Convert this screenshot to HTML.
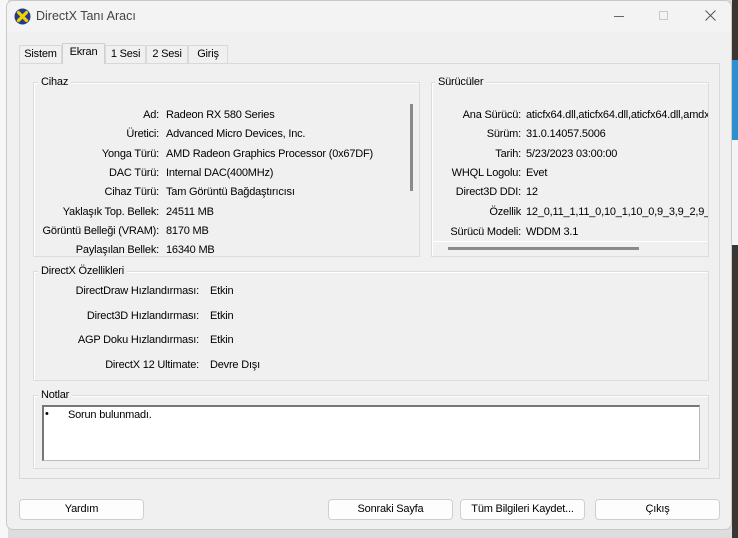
<!DOCTYPE html>
<html><head><meta charset="utf-8"><style>
*{box-sizing:border-box;margin:0;padding:0}
body{width:738px;height:538px;overflow:hidden;position:relative;background:#ddd;font-family:"Liberation Sans",sans-serif;font-size:12px;color:#000}
.a{position:absolute}
.win{left:6px;top:0;width:726px;height:530px;background:#f0f0f0;border:1px solid #c8c8c8;border-radius:7px;overflow:hidden}
.tb{left:0;top:0;width:100%;height:31px;background:#f3f3f3}
.grp{border:1px solid #dcdcdc;box-shadow:inset 1px 1px 0 #fff}
.gt{background:#f0f0f0;padding:0 3px;font-size:11px;letter-spacing:-0.2px}
.r{position:absolute;white-space:nowrap;font-size:11px;letter-spacing:-0.2px}
.l{text-align:right}
.btn{position:absolute;top:498px;height:21px;border:1px solid #cfcfcf;border-radius:4px;background:#fdfdfd;text-align:center;line-height:19px;font-size:11px;letter-spacing:-0.2px}
.tab{position:absolute;top:44px;height:18px;border:1px solid #d9d9d9;border-bottom:none;background:#f0f0f0;line-height:17px;text-align:center;font-size:11px;letter-spacing:-0.2px}
</style></head><body>
<div class="a" style="left:0;top:0;width:8px;height:538px;background:#f7f7f7"></div>
<div class="a" style="left:732px;top:0;width:6px;height:538px;background:#3a3634"></div>
<div class="a" style="left:732px;top:60px;width:6px;height:80px;background:#2d8fd0"></div>
<div class="a" style="left:732px;top:140px;width:6px;height:105px;background:#f4f4f4"></div>
<div class="a win">
 <div class="a tb"></div>
 <svg class="a" style="left:7px;top:7px" width="17" height="17" viewBox="0 0 17 17"><circle cx="8.5" cy="8.5" r="8" fill="#243a8c"/><path d="M4.5 4.5L12.5 12.5M12.5 4.5L4.5 12.5" stroke="#f1d200" stroke-width="3.2" stroke-linecap="round"/></svg>
 <div class="a" style="left:29px;top:8px;font-size:12.5px;color:#444">DirectX Tanı Aracı</div>
 <div class="a" style="left:607px;top:15px;width:10px;height:1px;background:#666"></div>
 <div class="a" style="left:652px;top:10px;width:9px;height:9px;border:1px solid #c8c8c8"></div>
 <svg class="a" style="left:698px;top:9px" width="11" height="11"><path d="M0.5 0.5L10.5 10.5M10.5 0.5L0.5 10.5" stroke="#555" stroke-width="1"/></svg>

 <div class="a" style="left:12px;top:62px;width:701px;height:416px;border:1px solid #d9d9d9;background:#f0f0f0"></div>
 <div class="tab" style="left:12px;width:43px">Sistem</div>
 <div class="tab" style="left:55px;width:43px;top:42px;height:21px;border-color:#d0d0d0;z-index:2">Ekran</div>
 <div class="tab" style="left:98px;width:41px">1 Sesi</div>
 <div class="tab" style="left:139px;width:42px">2 Sesi</div>
 <div class="tab" style="left:181px;width:40px">Giriş</div>

 <div class="a grp" style="left:26px;top:81px;width:387px;height:175px"></div>
 <div class="a gt" style="left:31px;top:75px">Cihaz</div>
 <div class="a" style="left:403px;top:103px;width:3px;height:87px;background:#8a8a8a"></div>
 <div class="r l" style="right:572px;top:108px">Ad:</div><div class="r" style="left:159px;top:108px">Radeon RX 580 Series</div>
 <div class="r l" style="right:572px;top:127px">Üretici:</div><div class="r" style="left:159px;top:127px">Advanced Micro Devices, Inc.</div>
 <div class="r l" style="right:572px;top:147px">Yonga Türü:</div><div class="r" style="left:159px;top:147px">AMD Radeon Graphics Processor (0x67DF)</div>
 <div class="r l" style="right:572px;top:166px">DAC Türü:</div><div class="r" style="left:159px;top:166px">Internal DAC(400MHz)</div>
 <div class="r l" style="right:572px;top:185px">Cihaz Türü:</div><div class="r" style="left:159px;top:185px">Tam Görüntü Bağdaştırıcısı</div>
 <div class="r l" style="right:572px;top:205px">Yaklaşık Top. Bellek:</div><div class="r" style="left:159px;top:205px">24511 MB</div>
 <div class="r l" style="right:572px;top:224px">Görüntü Belleği (VRAM):</div><div class="r" style="left:159px;top:224px">8170 MB</div>
 <div class="r l" style="right:572px;top:243px">Paylaşılan Bellek:</div><div class="r" style="left:159px;top:243px">16340 MB</div>

 <div class="a grp" style="left:424px;top:81px;width:278px;height:175px"></div>
 <div class="a gt" style="left:428px;top:75px">Sürücüler</div>
 <div class="a" style="left:425px;top:82px;width:276px;height:173px;overflow:hidden">
  <div class="r l" style="right:187px;top:26px">Ana Sürücü:</div><div class="r" style="left:94px;top:26px">aticfx64.dll,aticfx64.dll,aticfx64.dll,amdxc64.dll</div>
  <div class="r l" style="right:187px;top:45px">Sürüm:</div><div class="r" style="left:94px;top:45px">31.0.14057.5006</div>
  <div class="r l" style="right:187px;top:65px">Tarih:</div><div class="r" style="left:94px;top:65px">5/23/2023 03:00:00</div>
  <div class="r l" style="right:187px;top:84px">WHQL Logolu:</div><div class="r" style="left:94px;top:84px">Evet</div>
  <div class="r l" style="right:187px;top:103px">Direct3D DDI:</div><div class="r" style="left:94px;top:103px">12</div>
  <div class="r l" style="right:187px;top:123px">Özellik</div><div class="r" style="left:94px;top:123px">12_0,11_1,11_0,10_1,10_0,9_3,9_2,9_1</div>
  <div class="r l" style="right:187px;top:143px">Sürücü Modeli:</div><div class="r" style="left:94px;top:143px">WDDM 3.1</div>
  <div class="a" style="left:0;top:158px;width:276px;height:1px;background:#fff"></div>
  <div class="a" style="left:16px;top:164px;width:191px;height:3px;background:#8a8a8a"></div>
 </div>

 <div class="a grp" style="left:26px;top:270px;width:676px;height:110px"></div>
 <div class="a gt" style="left:31px;top:264px">DirectX Özellikleri</div>
 <div class="r l" style="right:532px;top:284px">DirectDraw Hızlandırması:</div><div class="r" style="left:203px;top:284px">Etkin</div>
 <div class="r l" style="right:532px;top:309px">Direct3D Hızlandırması:</div><div class="r" style="left:203px;top:309px">Etkin</div>
 <div class="r l" style="right:532px;top:333px">AGP Doku Hızlandırması:</div><div class="r" style="left:203px;top:333px">Etkin</div>
 <div class="r l" style="right:532px;top:358px">DirectX 12 Ultimate:</div><div class="r" style="left:203px;top:358px">Devre Dışı</div>

 <div class="a grp" style="left:26px;top:394px;width:676px;height:74px"></div>
 <div class="a gt" style="left:31px;top:388px">Notlar</div>
 <div class="a" style="left:35px;top:404px;width:658px;height:56px;background:#fff;border:1px solid #bbb;border-top:2px solid #777;border-left:2px solid #777"></div>
 <div class="r" style="left:38px;top:407px">•</div>
 <div class="r" style="left:61px;top:408px">Sorun bulunmadı.</div>

 <div class="btn" style="left:12px;width:125px">Yardım</div>
 <div class="btn" style="left:321px;width:125px">Sonraki Sayfa</div>
 <div class="btn" style="left:453px;width:125px">Tüm Bilgileri Kaydet...</div>
 <div class="btn" style="left:588px;width:125px">Çıkış</div>
</div>
</body></html>
